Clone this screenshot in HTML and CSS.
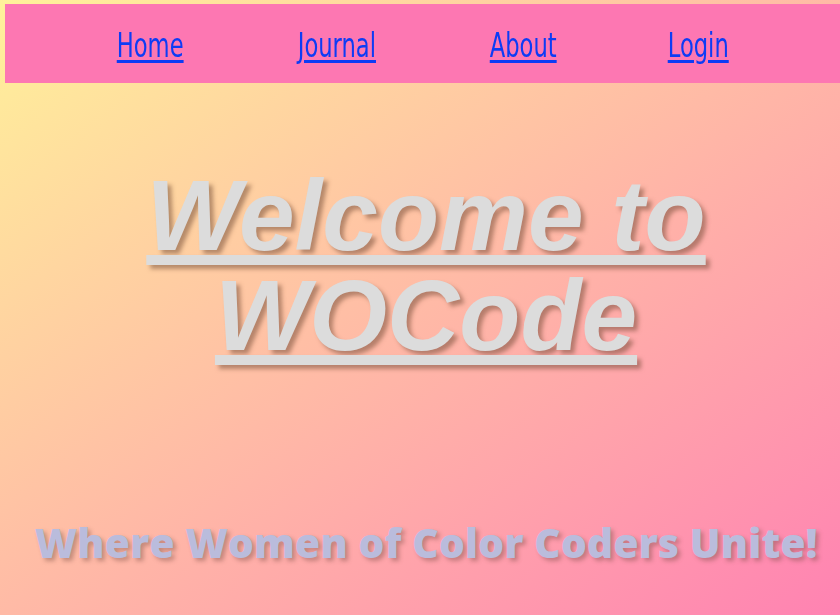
FILE: index.html
```html
<!DOCTYPE html>
<html lang="en">
<head>
<meta charset="utf-8">
<title>WOCode</title>
<link rel="stylesheet" href="styles.css">
</head>
<body>
<nav class="topnav">
  <a class="navlink" href="#">Home</a>
  <a class="navlink" href="#">Journal</a>
  <a class="navlink" href="#">About</a>
  <a class="navlink" href="#">Login</a>
</nav>
<main class="hero">
  <h1 class="title"><a class="titlelink" href="#">Welcome to<br>WOCode</a></h1>
  <p class="tagline">Where Women of Color Coders Unite!</p>
</main>
</body>
</html>
```
FILE: styles.css
```css
html, body {
  height: 100%;
}
body {
  margin: 0;
  background: linear-gradient(to bottom right, #fff29a, #ff82b2);
  overflow: hidden;
}
.topnav {
  margin: 4px 0 0 5px;
  height: 79px;
  background: #fd77b2;
  display: flex;
  align-items: center;
  justify-content: space-around;
  padding: 0 56px;
}
.navlink {
  font-family: "DejaVu Sans Condensed", "DejaVu Sans", sans-serif;
  font-size: 34px;
  color: #0d3cf5;
  text-decoration: underline;
  text-decoration-thickness: 3px;
  text-underline-offset: 3px;
  transform: scaleX(0.74);
  margin-top: 2px;
}
.hero {
  padding-left: 12px;
  text-align: center;
}
.title {
  margin: 82px 0 0;
  font-family: "Liberation Sans", Arial, sans-serif;
  font-size: 100px;
  font-weight: bold;
  font-style: italic;
  line-height: 100px;
}
.titlelink {
  color: #dcdcdc;
  text-decoration: underline;
  text-shadow: 4px 4px 4px rgba(110, 70, 50, 0.5);
}
.tagline {
  margin: 152px 0 0;
  font-family: "Open Sans", sans-serif;
  font-weight: 800;
  font-size: 41px;
  line-height: 50px;
  color: #babcdc;
  text-shadow: 3px 3px 4px rgba(110, 70, 60, 0.4);
}
```
